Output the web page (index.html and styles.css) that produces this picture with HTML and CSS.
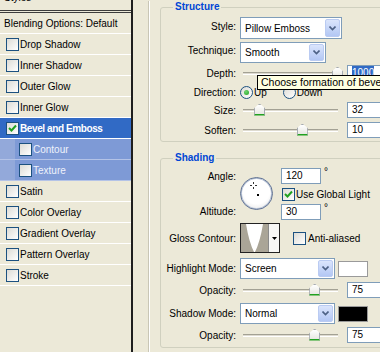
FILE: index.html
```html
<!DOCTYPE html>
<html lang="en">

<head>
    <meta charset="UTF-8">
    <meta name="viewport" content="width=device-width, initial-scale=1.0">
    <title>Layer Style</title>
    <link rel="stylesheet" href="styles.css">
</head>

<body>
    <div class="dialog">
        <div class="side">
            <div class="side-head">Styles</div>
            <div class="side-item plain">Blending Options: Default</div>
            <div class="side-item"><span class="check"></span>Drop Shadow</div>
            <div class="side-item"><span class="check"></span>Inner Shadow</div>
            <div class="side-item"><span class="check"></span>Outer Glow</div>
            <div class="side-item"><span class="check"></span>Inner Glow</div>
            <div class="side-item selected">
                <span class="check"><svg width="11" height="11" viewBox="0 0 11 11"><polyline points="2,5 4.5,7.5 9,2.5" fill="none" stroke="#21a121" stroke-width="2"/></svg></span>Bevel and Emboss
            </div>
            <div class="side-item sub"><span class="check"></span>Contour</div>
            <div class="side-item sub"><span class="check"></span>Texture</div>
            <div class="side-item"><span class="check"></span>Satin</div>
            <div class="side-item"><span class="check"></span>Color Overlay</div>
            <div class="side-item"><span class="check"></span>Gradient Overlay</div>
            <div class="side-item"><span class="check"></span>Pattern Overlay</div>
            <div class="side-item"><span class="check"></span>Stroke</div>
        </div>

        <div class="main">
            <div class="outer">
                <fieldset class="group structure">
                    <legend>Structure</legend>
                    <div class="row r-style">
                        <span class="label">Style:</span>
                        <div class="combo w102"><span class="combo-text">Pillow Emboss</span><span class="combo-btn"><svg width="7" height="5" viewBox="0 0 7 5"><polyline points="0.5,0.5 3.5,3.5 6.5,0.5" fill="none" stroke="#4d6185" stroke-width="1.6"/></svg></span></div>
                    </div>
                    <div class="row r-tech">
                        <span class="label">Technique:</span>
                        <div class="combo w86"><span class="combo-text">Smooth</span><span class="combo-btn"><svg width="7" height="5" viewBox="0 0 7 5"><polyline points="0.5,0.5 3.5,3.5 6.5,0.5" fill="none" stroke="#4d6185" stroke-width="1.6"/></svg></span></div>
                    </div>
                    <div class="row r-depth">
                        <span class="label">Depth:</span>
                        <div class="slider"><div class="track"><span class="thumb" style="left: 100%"></span></div></div>
                        <div class="num"><span class="sel">1000</span></div>
                    </div>
                    <div class="row r-dir">
                        <span class="label">Direction:</span>
                        <span class="radio on"></span><span class="opt">Up</span>
                        <span class="radio gap"></span><span class="opt">Down</span>
                    </div>
                    <div class="row r-size">
                        <span class="label">Size:</span>
                        <div class="slider"><div class="track"><span class="thumb" style="left: 18%"></span></div></div>
                        <div class="num">32</div>
                    </div>
                    <div class="row r-soften">
                        <span class="label">Soften:</span>
                        <div class="slider"><div class="track"><span class="thumb" style="left: 63%"></span></div></div>
                        <div class="num">10</div>
                    </div>
                </fieldset>

                <fieldset class="group shading">
                    <legend>Shading</legend>
                    <div class="angle-grid">
                        <span class="label g1">Angle:</span>
                        <div class="dial">
                            <svg class="cross" width="7" height="7" viewBox="0 0 7 7"><path d="M3.5 0v2M3.5 5v2M0 3.5h2M5 3.5h2" stroke="#333" stroke-width="1"/></svg>
                            <span class="dot"></span>
                        </div>
                        <div class="cell"><div class="num short">120</div><span class="deg">°</span></div>
                        <div class="cell g2"><span class="check"><svg width="11" height="11" viewBox="0 0 11 11"><polyline points="2,5 4.5,7.5 9,2.5" fill="none" stroke="#21a121" stroke-width="2"/></svg></span>Use Global Light</div>
                        <span class="label g3">Altitude:</span>
                        <div class="cell g3"><div class="num short">30</div><span class="deg">°</span></div>
                    </div>
                    <div class="row r-gloss">
                        <span class="label">Gloss Contour:</span>
                        <div class="contour">
                            <svg width="27" height="28" viewBox="0 0 27 28"><rect width="27" height="28" fill="#fff"/><path d="M0 0H5Q8 18 13 28H0Z M27 0H22Q19 18 14 28H27Z" fill="#aaa597"/></svg>
                            <span class="contour-btn"><svg width="5" height="3" viewBox="0 0 5 3"><path d="M0 0H5L2.5 3Z" fill="#000"/></svg></span>
                        </div>
                        <span class="check aa"></span>Anti-aliased
                    </div>
                    <div class="row r-mode">
                        <span class="label">Highlight Mode:</span>
                        <div class="combo w95"><span class="combo-text">Screen</span><span class="combo-btn"><svg width="7" height="5" viewBox="0 0 7 5"><polyline points="0.5,0.5 3.5,3.5 6.5,0.5" fill="none" stroke="#4d6185" stroke-width="1.6"/></svg></span></div>
                        <span class="swatch white"></span>
                    </div>
                    <div class="row r-op">
                        <span class="label">Opacity:</span>
                        <div class="slider"><div class="track"><span class="thumb" style="left: 76%"></span></div></div>
                        <div class="num">75</div>
                    </div>
                    <div class="row r-mode2">
                        <span class="label">Shadow Mode:</span>
                        <div class="combo w95"><span class="combo-text">Normal</span><span class="combo-btn"><svg width="7" height="5" viewBox="0 0 7 5"><polyline points="0.5,0.5 3.5,3.5 6.5,0.5" fill="none" stroke="#4d6185" stroke-width="1.6"/></svg></span></div>
                        <span class="swatch black"></span>
                    </div>
                    <div class="row r-op2">
                        <span class="label">Opacity:</span>
                        <div class="slider"><div class="track"><span class="thumb" style="left: 76%"></span></div></div>
                        <div class="num">75</div>
                    </div>
                </fieldset>
            </div>
        </div>

        <div class="tooltip">Choose formation of bevel</div>
    </div>
</body>

</html>
```

FILE: styles.css
```css
* {
    margin: 0;
    padding: 0;
    box-sizing: border-box;
}

body {
    width: 380px;
    height: 352px;
    overflow: hidden;
    background-color: #ece9d8;
    font-family: "Liberation Sans", Arial, sans-serif;
    font-size: 10px;
    color: #000;
}

.dialog {
    display: flex;
    position: relative;
    height: 352px;
}

/* left style list */

.side {
    width: 133px;
    flex: none;
    border-right: 2px solid #1e1e1e;
}

.side-head {
    height: 21px;
    margin-top: -11px;
    line-height: 18px;
    padding-left: 4px;
    border-bottom: 3px double #3c3c3c;
    box-sizing: content-box;
}

.side-item {
    height: 21px;
    display: flex;
    align-items: center;
    padding-left: 6px;
    border-bottom: 1px solid #fff;
    white-space: nowrap;
}

.side-item.plain {
    padding-left: 4px;
}

.side-item.selected {
    background-color: #316ac5;
    color: #fff;
    font-weight: bold;
    letter-spacing: -0.4px;
}

.side-item.sub {
    padding-left: 19px;
    color: #eef2fb;
    background: linear-gradient(to right, #93a9da 15px, #7e9ad6 15px);
    border-bottom-color: #b4c3e7;
}

.check {
    width: 13px;
    height: 13px;
    flex: none;
    margin-right: 1px;
    border: 1px solid #1c5180;
    background: linear-gradient(135deg, #dcdbd5, #fff);
    display: flex;
    align-items: center;
    justify-content: center;
}

/* right panel */

.main {
    flex: none;
    width: 247px;
    padding-left: 15px;
}

.outer {
    height: 100%;
    padding-left: 11px;
    border-left: 1px solid #c9c6b6;
    box-shadow: inset 1px 0 #fff;
}

.group {
    width: 240px;
    border: 1px solid #d0d0bf;
    border-radius: 3px;
    padding: 4px 0 3px;
}

.group legend {
    margin-left: 12px;
    padding: 0 2px;
    font-weight: bold;
    color: #0046d5;
    line-height: 12px;
}

.structure {
    margin-top: 1px;
}

.shading {
    margin-top: 10px;
    padding-bottom: 4px;
}

.row {
    display: flex;
    align-items: center;
    white-space: nowrap;
}

.label {
    width: 79px;
    flex: none;
    padding-right: 4px;
    text-align: right;
}

.r-style { height: 22px; margin-bottom: 3px; }
.r-tech { height: 21px; margin-bottom: 2px; }
.r-depth { height: 16px; margin-bottom: 2px; }
.r-dir { height: 19px; }
.r-size { height: 16px; margin-bottom: 4px; }
.r-soften { height: 16px; }

.r-style .label,
.r-tech .label {
    padding-bottom: 4px;
}

.r-gloss { height: 30px; margin-top: 4px; }
.r-mode { height: 21px; margin-top: 5px; }
.r-op { height: 16px; margin-top: 3px; }
.r-mode2 { height: 21px; margin-top: 5px; }
.r-op2 { height: 16px; margin-top: 3px; }

/* combo box */

.combo {
    height: 100%;
    display: flex;
    align-items: stretch;
    border: 1px solid #7f9db9;
    background-color: #fff;
}

.w102 { width: 102px; }
.w86 { width: 86px; }
.w95 { width: 95px; }

.combo-text {
    flex: 1;
    padding-left: 4px;
    display: flex;
    align-items: center;
}

.combo-btn {
    width: 15px;
    margin: 1px;
    border: 1px solid #bacbf2;
    border-radius: 2px;
    background: linear-gradient(#dbe5fc, #b3c7f4);
    display: flex;
    align-items: center;
    justify-content: center;
}

/* slider */

.slider {
    width: 98px;
    flex: none;
    padding-left: 3px;
}

.track {
    position: relative;
    height: 3px;
    border-top: 1px solid #a3a194;
    border-bottom: 1px solid #fff;
    background-color: #dedbd0;
}

.thumb {
    position: absolute;
    top: -6px;
    width: 11px;
    height: 12px;
    margin-left: -6px;
    background: linear-gradient(#fff, #e8e8e2);
    border: 1px solid #a6abb2;
    border-bottom: 2px solid #21a121;
    clip-path: polygon(0 40%, 50% 0, 100% 40%, 100% 100%, 0 100%);
}

/* number field */

.num {
    width: 45px;
    height: 16px;
    flex: none;
    margin-left: 9px;
    padding-left: 4px;
    line-height: 14px;
    border: 1px solid #7f9db9;
    background-color: #fff;
}

.num .sel {
    display: inline-block;
    background-color: #316ac5;
    color: #fff;
}

.num.short {
    width: 40px;
    margin-left: 0;
}

.deg {
    align-self: flex-start;
    margin-left: 3px;
    line-height: 8px;
}

/* radio */

.radio {
    width: 13px;
    height: 13px;
    flex: none;
    margin-right: 1px;
    border: 1px solid #1c5180;
    border-radius: 50%;
    background: linear-gradient(135deg, #dcdbd5, #fff);
    display: flex;
    align-items: center;
    justify-content: center;
}

.radio.on::after {
    content: "";
    width: 5px;
    height: 5px;
    border-radius: 50%;
    background: radial-gradient(circle at 40% 35%, #6ed66e, #21a121);
}

.radio.gap {
    margin-left: 16px;
}

/* angle block */

.angle-grid {
    display: grid;
    grid-template-columns: 79px 41px 1fr;
    grid-template-rows: 16px 16px 15px;
    row-gap: 2px;
}

.angle-grid .g1 { grid-row: 1; grid-column: 1; align-self: center; }
.angle-grid .g2 { grid-row: 2; grid-column: 3; }
.angle-grid .g3 { grid-row: 3; align-self: center; }
.angle-grid .label.g3 { grid-column: 1; }
.angle-grid .cell.g3 { grid-column: 3; }

.cell {
    display: flex;
    align-items: center;
}

.cell.g2 .check {
    margin-left: 1px;
}

.dial {
    grid-row: 1 / 4;
    grid-column: 2;
    align-self: center;
    position: relative;
    width: 33px;
    height: 33px;
    border: 1px solid #5f7192;
    border-radius: 50%;
    box-shadow: inset 0 0 0 1px #b4c0d4;
    background: radial-gradient(circle at 50% 40%, #fff 55%, #dcdcdc 100%);
}

.dial .cross {
    position: absolute;
    left: 9px;
    top: 4px;
}

.dial .dot {
    position: absolute;
    left: 16px;
    top: 16px;
    width: 2px;
    height: 2px;
    background-color: #000;
}

/* gloss contour */

.contour {
    display: flex;
    width: 40px;
    height: 30px;
    border: 1px solid #222;
    background-color: #fff;
}

.contour-btn {
    flex: 1;
    border-left: 1px solid #8a8a8a;
    background-color: #f7f7f5;
    display: flex;
    align-items: center;
    justify-content: center;
}

.check.aa {
    margin-left: 13px;
    margin-right: 2px;
}

.swatch {
    width: 30px;
    height: 16px;
    margin-left: 3px;
    border: 1px solid #9a9a9a;
}

.swatch.white { background-color: #fff; }
.swatch.black { background-color: #000; }

/* tooltip over the depth row */

.tooltip {
    position: absolute;
    left: 257px;
    top: 75px;
    width: 150px;
    height: 15px;
    padding-left: 3px;
    border: 1px solid #000;
    background-color: #ffffe1;
    font-size: 10.5px;
    line-height: 13px;
    white-space: nowrap;
}
```
